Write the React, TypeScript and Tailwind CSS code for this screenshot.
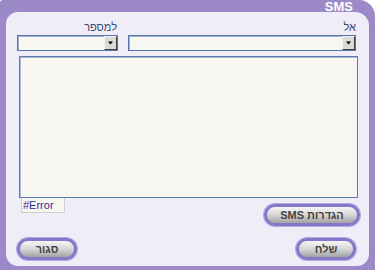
import React from "react";

const font = { fontFamily: '"Liberation Sans", "DejaVu Sans", Arial, sans-serif' };

function Select({ width }: { width: string }) {
  return (
    <div dir="ltr" className={`${width} h-[16px] flex flex-row justify-end border border-[#5576aa] bg-[#f8f6f0] shadow-[inset_1px_1px_0_#9fb2d0]`}>
      <div className="w-[13px] h-full flex items-center justify-center bg-[#dcdad4] border-l border-t border-l-[#f4f4f4] border-t-[#f4f4f4] border-r border-b border-r-[#404040] border-b-[#404040]">
        <svg width="7" height="4" viewBox="0 0 7 4">
          <polygon points="1,0.5 6,0.5 3.5,3.5" fill="#000" />
        </svg>
      </div>
    </div>
  );
}

function Pill({ label, width }: { label: string; width: string }) {
  return (
    <div className={`${width} h-[22px] rounded-full border-[3px] border-[#8677c9] shadow-[0_0_0_1px_#b3a8de] bg-gradient-to-b from-[#f6f6f6] via-[#d6d6d6] to-[#a3a3a3] flex items-center justify-center`}>
      <span className="text-[11px] leading-none font-bold text-[#444444]" style={font}>{label}</span>
    </div>
  );
}

export default function App() {
  return (
    <div dir="rtl" className="w-[375px] h-[270px] bg-white" style={font}>
      <div className="w-[375px] h-[270px] bg-[#9b8ac7] rounded-tr-[16px] rounded-tl-[3px] flex flex-col">
        <div className="h-[12px] flex items-start pr-[22px]">
          <span className="text-[13px] leading-[12px] font-bold text-white mt-[1px]" style={font}>SMS</span>
        </div>
        <div className="mx-[6px] h-[254px] bg-[#efedf8] rounded-[12px] rounded-tr-[14px] flex flex-col pt-[8px]">
          <div className="flex flex-row pr-[13px] pl-[12px] gap-[10px]">
            <div className="flex flex-col items-start">
              <span className="text-[11px] leading-[15px] text-[#3a4976]">אל</span>
              <Select width="w-[228px]" />
            </div>
            <div className="flex flex-col items-start">
              <span className="text-[11px] leading-[15px] text-[#3a4976] mr-[1px]">למספר</span>
              <Select width="w-[101px]" />
            </div>
          </div>
          <div className="pr-[11px] pl-[13px] mt-[5px]">
            <div className="h-[142px] border border-[#5b7cb0] bg-[#f8f6f0] shadow-[inset_1px_1px_0_#a9bad4]" />
          </div>
          <div className="flex flex-row justify-between pr-[9px] pl-[15px] h-[29px]">
            <div className="w-[96px] h-[23px] mt-[6px]">
              <Pill label="הגדרות SMS" width="w-[96px]" />
            </div>
            <div dir="ltr" className="w-[44px] h-[15px] border border-[#cfcfcf] border-t-0 bg-[#f8f6f0] flex items-center pl-[1px]">
              <span className="text-[11px] leading-none text-[#2a2a9c]">#Error</span>
            </div>
          </div>
          <div className="flex flex-row justify-between pr-[13px] pl-[11px] mt-[11px]">
            <Pill label="שלח" width="w-[60px]" />
            <Pill label="סגור" width="w-[60px]" />
          </div>
        </div>
      </div>
    </div>
  );
}
